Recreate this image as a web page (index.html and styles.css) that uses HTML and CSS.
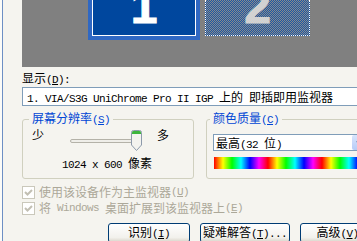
FILE: index.html
```html
<!DOCTYPE html>
<html lang="zh-CN">
<head>
<meta charset="utf-8">
<title>显示 属性</title>
<link rel="stylesheet" href="styles.css">
</head>
<body>
<div class="tab">
  <div class="edge"></div>
  <div class="page">
    <div class="preview">
      <div class="mon mon1"><span class="num">1</span></div>
      <div class="mon mon2"><span class="num">2</span></div>
    </div>
    <div class="lbl">显示<span class="m">(<u>D</u>):</span></div>
    <div class="textbox"><span class="m">1. VIA/S3G UniChrome Pro II IGP </span>上的<span class="m"> </span>即插即用监视器</div>
    <div class="groups">
      <fieldset class="grp res">
        <legend>屏幕分辨率<span class="m">(<u>S</u>)</span></legend>
        <div class="slider-row">
          <span>少</span>
          <div class="slider">
            <div class="track"></div>
            <svg class="thumb" viewBox="0 0 11 21" width="11" height="21">
              <path d="M0.5 2.5 Q0.5 0.5 2.5 0.5 H8.5 Q10.5 0.5 10.5 2.5 V15 L5.5 20.5 L0.5 15 Z" fill="#f3f3ef" stroke="#8d9aab"/>
              <path d="M1 2.5 Q1 1 2.5 1 H8.5 Q10 1 10 2.5 V4 H1 Z" fill="#3cb53c"/>
            </svg>
          </div>
          <span>多</span>
        </div>
        <div class="res-text"><span class="m">1024 x 600 </span>像素</div>
      </fieldset>
      <fieldset class="grp color">
        <legend>颜色质量<span class="m">(<u>C</u>)</span></legend>
        <div class="combo">
          <span class="val">最高<span class="m">(32 </span>位<span class="m">)</span></span>
          <span class="drop"><svg viewBox="0 0 17 15" width="17" height="15"><path d="M5 6 L8.5 9.5 L12 6" stroke="#4d6185" stroke-width="2" fill="none"/></svg></span>
        </div>
        <div class="rainbow"></div>
      </fieldset>
    </div>
    <label class="chk"><span class="box"><svg viewBox="0 0 11 11" width="11" height="11"><path d="M2 5 L4.5 7.5 L9 3" stroke="#c2bfb3" stroke-width="2" fill="none"/></svg></span>使用该设备作为主监视器<span class="m">(<u>U</u>)</span></label>
    <label class="chk"><span class="box"><svg viewBox="0 0 11 11" width="11" height="11"><path d="M2 5 L4.5 7.5 L9 3" stroke="#c2bfb3" stroke-width="2" fill="none"/></svg></span>将<span class="m"> Windows </span>桌面扩展到该监视器上<span class="m">(<u>E</u>)</span></label>
    <div class="buttons">
      <button class="btn b1">识别<span class="m">(<u>I</u>)</span></button>
      <button class="btn b2">疑难解答<span class="m">(<u>T</u>)...</span></button>
      <button class="btn b3">高级<span class="m">(<u>V</u>)</span></button>
    </div>
  </div>
</div>
</body>
</html>
```
FILE: styles.css
```css
* { box-sizing: border-box; }
html, body { margin: 0; padding: 0; }
body {
  width: 357px;
  height: 241px;
  overflow: hidden;
  background: #f5f4ef;
  font: 12px/14px "Noto Sans CJK SC", "Liberation Sans", sans-serif;
  color: #000;
}
.tab { display: flex; height: 241px; }
.edge {
  flex: none;
  width: 3px;
  background: #fbfbf8;
  border-right: 1px solid #6d8fc4;
}
.page { flex: none; width: 420px; padding-left: 19px; }

.m {
  font-family: "Liberation Mono", monospace;
  font-size: 11px;
  letter-spacing: -0.6px;
}

/* monitor preview */
.preview {
  height: 67px;
  background: #808080;
  display: flex;
  align-items: flex-start;
  padding-left: 66px;
}
.mon {
  display: flex;
  justify-content: center;
  align-items: flex-end;
  flex: none;
}
.mon1 {
  width: 112px;
  height: 40px;
  border: 4px solid #2f68c3;
  border-top: 0;
  background: #00479e;
  box-shadow: inset 0 -1px #fff, inset 1px 0 #fff, inset -1px 0 #fff;
  padding-bottom: 5px;
}
.mon2 {
  margin-left: 5px;
  width: 105px;
  height: 36px;
  border: 1px dotted #fff;
  border-top: 0;
  background: repeating-conic-gradient(#1b57a6 0 25%, #8a8a8a 0 50%) 0 0 / 2px 2px;
  padding-bottom: 4px;
}
.num {
  display: block;
  font: bold 48px/48px "Liberation Sans", sans-serif;
  color: #fff;
  -webkit-text-stroke: 1px currentColor;
}
.mon2 .num { color: #d2d2d2; }

/* display label + box */
.lbl { margin-top: 4px; height: 14px; }
.textbox {
  margin-top: 2px;
  width: 380px;
  height: 19px;
  border: 1px solid #7f9db9;
  background: #fff;
  padding-left: 4px;
  line-height: 17px;
  white-space: pre;
}

/* group boxes */
.groups { display: flex; margin-top: 5px; }
.grp {
  margin: 0;
  min-width: 0;
  border: 1px solid #d0d0bf;
  border-radius: 3px;
  padding: 0 6px 6px 9px;
}
.grp legend {
  padding: 0 3px;
  margin-left: -3px;
  color: #0046d5;
  line-height: 14px;
}
.res { width: 172px; flex: none; }
.color { width: 200px; flex: none; margin-left: 12px; padding-left: 6px; }

.slider-row {
  display: flex;
  align-items: flex-start;
  height: 22px;
  margin-top: 1px;
}
.slider {
  position: relative;
  width: 84px;
  height: 22px;
  margin: 0 7px 0 22px;
}
.track {
  position: absolute;
  left: 4px;
  width: 72px;
  top: 11px;
  height: 4px;
  border: 1px solid #b4b2a8;
  border-radius: 2px;
  background: #efeee9;
}
.thumb { position: absolute; left: 65px; top: 2px; }
.res-text { margin-top: 6px; padding-left: 30px; white-space: pre; }

.combo {
  display: flex;
  margin-top: 7px;
  width: 158px;
  height: 17px;
  border: 1px solid #7f9db9;
  background: #fff;
  line-height: 15px;
  white-space: pre;
}
.combo .val { padding-left: 2px; }
.drop {
  margin: 0 1px 0 auto;
  width: 17px;
  height: 15px;
  border-radius: 2px;
  background: linear-gradient(#d9e5fd, #b6cbf7);
}
.drop svg { display: block; }
.rainbow {
  margin: 6px 0 0 1px;
  width: 190px;
  height: 12px;
  background: repeating-linear-gradient(90deg,
    #ff0000 0, #ffff00 9px, #00ff00 18px, #00ffff 27px,
    #0000ff 36px, #ff00ff 45px, #ff0000 54px);
}

/* checkboxes */
.chk {
  display: flex;
  align-items: center;
  height: 16px;
  color: #aca899;
  white-space: pre;
}
.chk:first-of-type { margin-top: 5px; }
.box {
  flex: none;
  width: 13px;
  height: 13px;
  border: 1px solid #cac8bb;
  background: #fff;
  margin-right: 4px;
}
.box svg { display: block; }

/* buttons */
.buttons { display: flex; gap: 10px; margin: 7px 0 0 86px; }
.btn {
  flex: none;
  height: 20px;
  padding: 0;
  border: 1px solid #003c74;
  border-radius: 3px;
  background: linear-gradient(#ffffff, #f2f1ec 75%, #d8d3c8);
  font: inherit;
  color: #000;
  white-space: pre;
}
.b1 { width: 82px; }
.b2 { width: 90px; }
.b3 { width: 75px; }
```
